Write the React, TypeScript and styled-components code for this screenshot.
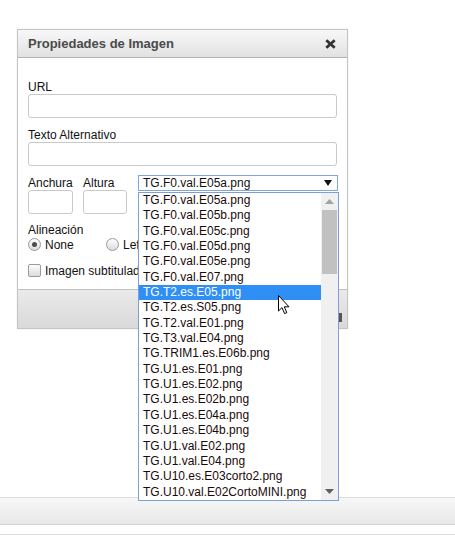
import React from "react";
import styled, { createGlobalStyle } from "styled-components";

const GlobalStyle = createGlobalStyle`
  html, body { margin: 0; padding: 0; background: #fff; }
  body { font-family: "Liberation Sans", Arial, sans-serif; }
  * { box-sizing: border-box; }
`;

const Page = styled.div`
  position: relative;
  height: 537px;
  display: flex;
  flex-direction: column;
  overflow: hidden;
`;

const Dialog = styled.div`
  margin: 29px 0 0 17px;
  width: 331px;
  border: 1px solid #c4c4c4;
  background: #fff;
  box-shadow: 0 0 2px rgba(0, 0, 0, 0.08);
  display: flex;
  flex-direction: column;
`;

const Header = styled.div`
  height: 28px;
  border-bottom: 1px solid #b3b3b3;
  background: linear-gradient(#f8f8f8, #e1e1e1);
  display: flex;
  align-items: center;
  justify-content: space-between;
  padding: 0 11px 0 10px;
`;

const Title = styled.span`
  font-size: 13px;
  font-weight: bold;
  color: #4a4a4a;
`;

const CloseButton = styled.span`
  display: flex;
  width: 11px;
  height: 10px;
`;

const Body = styled.div`
  padding: 23px 10px 11px;
  display: flex;
  flex-direction: column;
`;

const Field = styled.div<{ $mt?: number }>`
  display: flex;
  flex-direction: column;
  margin-top: ${(p) => p.$mt ?? 0}px;
`;

const Label = styled.label`
  font-size: 12px;
  line-height: 13px;
  height: 13px;
  color: #111;
  white-space: nowrap;
`;

const TextInput = styled.div<{ $w?: number }>`
  height: 24px;
  width: ${(p) => (p.$w ? `${p.$w}px` : "100%")};
  border: 1px solid #c9c9c9;
  border-radius: 3px;
  background: #fff;
`;

const Row = styled.div`
  display: flex;
  align-items: flex-start;
  margin-top: 9px;
`;

const SizeCol = styled.div<{ $mr: number }>`
  display: flex;
  flex-direction: column;
  margin-top: 2px;
  margin-right: ${(p) => p.$mr}px;
`;

const SelectWrap = styled.div`
  position: relative;
  z-index: 5;
`;

const SelectBox = styled.div`
  width: 200px;
  height: 16px;
  border: 1px solid #7ea6e6;
  background: #fff;
  display: flex;
  align-items: center;
  justify-content: space-between;
  padding: 0 5px 0 4px;
  font-size: 12px;
  color: #111;
`;

const DropList = styled.div`
  position: absolute;
  left: 0;
  top: 17px;
  width: 201px;
  height: 309px;
  border: 1px solid #7d9fd6;
  background: #fff;
  display: flex;
`;

const Items = styled.div`
  flex: 1;
  display: flex;
  flex-direction: column;
`;

const Item = styled.div<{ $active?: boolean }>`
  height: 15.35px;
  line-height: 14px;
  font-size: 12px;
  padding-left: 4px;
  white-space: nowrap;
  color: ${(p) => (p.$active ? "#fff" : "#1a0a0a")};
  background: ${(p) => (p.$active ? "#2f8ff5" : "transparent")};
`;

const Scrollbar = styled.div`
  width: 17px;
  background: #f0f0f0;
  display: flex;
  flex-direction: column;
  align-items: center;
`;

const ScrollArrow = styled.div`
  height: 17px;
  width: 17px;
  display: flex;
  align-items: center;
  justify-content: center;
`;

const ScrollGap = styled.div`
  flex: 1;
`;

const Thumb = styled.div`
  width: 15px;
  height: 64px;
  background: #c1c1c1;
`;

const Choice = styled.div<{ $mt?: number }>`
  display: flex;
  align-items: center;
  height: 15px;
  margin-top: ${(p) => p.$mt ?? 0}px;
  font-size: 12px;
  color: #111;
`;

const ChoiceItem = styled.span<{ $w?: number }>`
  display: flex;
  align-items: center;
  gap: 4px;
  width: ${(p) => (p.$w ? `${p.$w}px` : "auto")};
  white-space: nowrap;
`;

const Radio = styled.span<{ $checked?: boolean }>`
  width: 13px;
  height: 13px;
  border-radius: 50%;
  border: 1px solid #9a9a9a;
  background: linear-gradient(#fdfdfd, #dcdcdc);
  display: flex;
  align-items: center;
  justify-content: center;
  &::after {
    content: "";
    width: 5px;
    height: 5px;
    border-radius: 50%;
    background: ${(p) => (p.$checked ? "#4d4d4d" : "transparent")};
  }
`;

const Checkbox = styled.span`
  width: 13px;
  height: 13px;
  border-radius: 2px;
  border: 1px solid #9a9a9a;
  background: linear-gradient(#fdfdfd, #dcdcdc);
`;

const Footer = styled.div`
  height: 39px;
  border-top: 1px solid #c2c2c2;
  background: linear-gradient(#eaeaea, #d9d9d9);
  display: flex;
  align-items: flex-start;
  justify-content: flex-end;
  padding: 23px 5px 0 0;
`;

const FooterButton = styled.span`
  width: 40px;
  height: 9px;
  background: #555;
`;

const BottomBar = styled.div`
  margin-top: auto;
  height: 28px;
  border-top: 1px solid #dcdcdc;
  border-bottom: 1px solid #d2d2d2;
  background: linear-gradient(#f7f7f7, #e8e8e8);
`;

const BottomLine = styled.div`
  margin-top: 9px;
  height: 3px;
  border-top: 1px solid #dedede;
`;

const Cursor = styled.svg`
  position: absolute;
  left: 278px;
  top: 295px;
  z-index: 10;
`;

const files = [
  "TG.F0.val.E05a.png",
  "TG.F0.val.E05b.png",
  "TG.F0.val.E05c.png",
  "TG.F0.val.E05d.png",
  "TG.F0.val.E05e.png",
  "TG.F0.val.E07.png",
  "TG.T2.es.E05.png",
  "TG.T2.es.S05.png",
  "TG.T2.val.E01.png",
  "TG.T3.val.E04.png",
  "TG.TRIM1.es.E06b.png",
  "TG.U1.es.E01.png",
  "TG.U1.es.E02.png",
  "TG.U1.es.E02b.png",
  "TG.U1.es.E04a.png",
  "TG.U1.es.E04b.png",
  "TG.U1.val.E02.png",
  "TG.U1.val.E04.png",
  "TG.U10.es.E03corto2.png",
  "TG.U10.val.E02CortoMINI.png",
];

export default function App() {
  return (
    <Page>
      <GlobalStyle />
      <Dialog>
        <Header>
          <Title>Propiedades de Imagen</Title>
          <CloseButton>
            <svg width="11" height="10" viewBox="0 0 11 10">
              <path d="M1.3 1.2 L9.7 8.8 M9.7 1.2 L1.3 8.8" stroke="#333" strokeWidth="2.8" />
            </svg>
          </CloseButton>
        </Header>
        <Body>
          <Field>
            <Label>URL</Label>
            <TextInput />
          </Field>
          <Field $mt={11}>
            <Label>Texto Alternativo</Label>
            <TextInput />
          </Field>
          <Row>
            <SizeCol $mr={10}>
              <Label>Anchura</Label>
              <TextInput $w={45} />
            </SizeCol>
            <SizeCol $mr={11}>
              <Label>Altura</Label>
              <TextInput $w={44} />
            </SizeCol>
            <SelectWrap>
              <SelectBox>
                <span>TG.F0.val.E05a.png</span>
                <svg width="8" height="6" viewBox="0 0 8 6">
                  <path d="M0 0 H8 L4 6 Z" fill="#111" />
                </svg>
              </SelectBox>
              <DropList>
                <Items>
                  {files.map((f, i) => (
                    <Item key={f} $active={i === 6}>
                      {f}
                    </Item>
                  ))}
                </Items>
                <Scrollbar>
                  <ScrollArrow>
                    <svg width="9" height="5" viewBox="0 0 9 5">
                      <path d="M0 5 L4.5 0 L9 5 Z" fill="#a3a3a3" />
                    </svg>
                  </ScrollArrow>
                  <Thumb />
                  <ScrollGap />
                  <ScrollArrow>
                    <svg width="9" height="5" viewBox="0 0 9 5">
                      <path d="M0 0 L9 0 L4.5 5 Z" fill="#606060" />
                    </svg>
                  </ScrollArrow>
                </Scrollbar>
              </DropList>
            </SelectWrap>
          </Row>
          <Field $mt={10}>
            <Label>Alineación</Label>
          </Field>
          <Choice>
            <ChoiceItem $w={78}>
              <Radio $checked />
              None
            </ChoiceItem>
            <ChoiceItem>
              <Radio />
              Left
            </ChoiceItem>
          </Choice>
          <Choice $mt={11}>
            <ChoiceItem>
              <Checkbox />
              Imagen subtitulada
            </ChoiceItem>
          </Choice>
        </Body>
        <Footer>
          <FooterButton />
        </Footer>
      </Dialog>
      <BottomBar />
      <BottomLine />
      <Cursor width="13" height="20" viewBox="0 0 13 20">
        <path
          d="M0.5 0.5 L0.5 16 L4 12.6 L6.6 18.6 L8.8 17.7 L6.3 11.8 L11 11.8 Z"
          fill="#fff"
          stroke="#000"
          strokeWidth="1"
          strokeLinejoin="round"
        />
      </Cursor>
    </Page>
  );
}
